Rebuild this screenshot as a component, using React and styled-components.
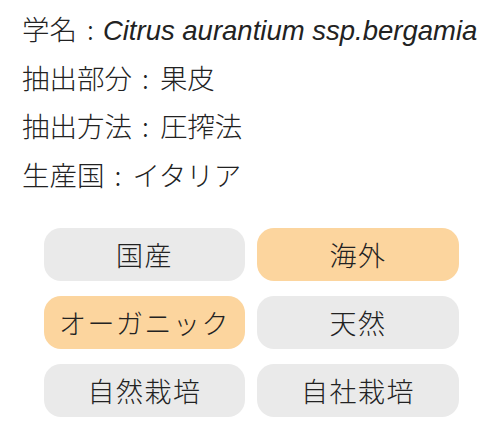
import React from "react";
import styled, { createGlobalStyle } from "styled-components";

const Global = createGlobalStyle`
  html, body { margin: 0; padding: 0; background: #fff; }
  body { font-family: "Liberation Sans", "Noto Sans CJK JP", sans-serif; color: #222; }
`;

const Page = styled.div`
  width: 500px;
  height: 440px;
  box-sizing: border-box;
  padding: 4px 0 0 22px;
`;

const InfoList = styled.div`
  display: flex;
  flex-direction: column;
`;

const InfoLine = styled.div`
  height: 48.5px;
  line-height: 48.5px;
  font-size: 27.5px;
  font-family: "Noto Sans CJK JP", sans-serif;
  font-weight: 300;
  white-space: nowrap;
`;

const Colon = styled.span`
  display: inline-block;
  margin: 0 ${(p) => (p.$tight ? "9px" : "11px")} 0 10px;
`;

const Latin = styled.span`
  font-family: "Liberation Sans", sans-serif;
  font-style: italic;
  font-weight: 400;
  font-size: 27.5px;
`;

const Grid = styled.div`
  display: grid;
  grid-template-columns: 201px 202px;
  column-gap: 12px;
  row-gap: 15px;
  margin: 30px 0 0 22px;
`;

const Tag = styled.div`
  height: 53px;
  border-radius: 17px;
  background: ${(p) => (p.$active ? "#fcd59e" : "#eaeaea")};
  display: flex;
  align-items: center;
  justify-content: center;
  font-family: "Noto Sans CJK JP", sans-serif;
  font-weight: 300;
  font-size: 27px;
  color: #222;
  letter-spacing: 1.5px;
`;

const tags = [
  ["国産", false],
  ["海外", true],
  ["オーガニック", true],
  ["天然", false],
  ["自然栽培", false],
  ["自社栽培", false],
];

export default function App() {
  return (
    <>
      <Global />
      <Page>
        <InfoList>
          <InfoLine>
            学名<Colon $tight>:</Colon>
            <Latin>Citrus aurantium ssp.bergamia</Latin>
          </InfoLine>
          <InfoLine>
            抽出部分<Colon>:</Colon>果皮
          </InfoLine>
          <InfoLine>
            抽出方法<Colon>:</Colon>圧搾法
          </InfoLine>
          <InfoLine>
            生産国<Colon>:</Colon>イタリア
          </InfoLine>
        </InfoList>
        <Grid>
          {tags.map(([t, a]) => (
            <Tag key={t} $active={a}>
              {t}
            </Tag>
          ))}
        </Grid>
      </Page>
    </>
  );
}
